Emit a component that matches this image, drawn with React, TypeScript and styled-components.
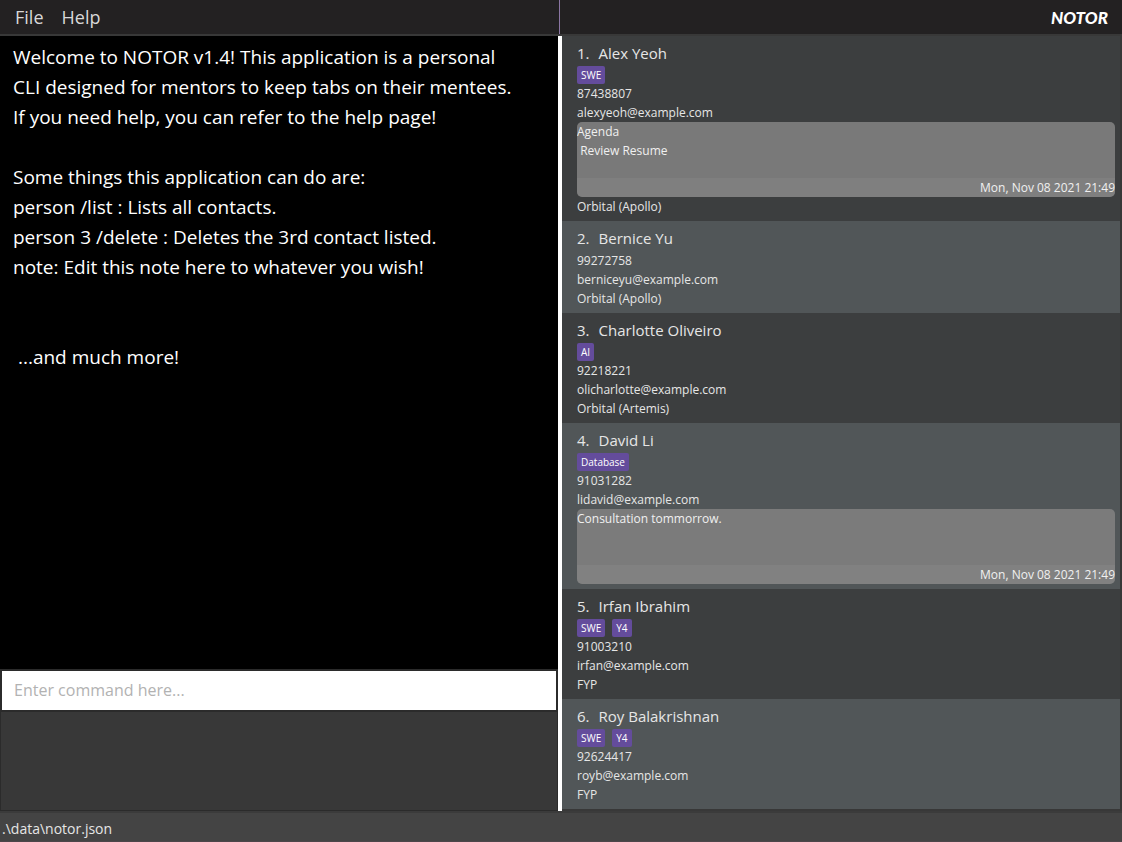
import React from "react";
import styled, { createGlobalStyle } from "styled-components";

const GlobalStyle = createGlobalStyle`
  * { box-sizing: border-box; }
  body {
    margin: 0;
    background: #383838;
    font-family: "Open Sans", "Noto Sans", sans-serif;
  }
`;

const Window = styled.div`
  display: flex;
  flex-direction: column;
  min-height: 100vh;
`;

const TopBar = styled.header`
  display: grid;
  grid-template-columns: 1fr 1fr;
  height: 34px;
  background: #232122;
`;

const MenuBar = styled.nav`
  display: flex;
  align-items: center;
  gap: 18px;
  padding-left: 15px;
`;

const MenuButton = styled.button`
  border: 0;
  padding: 0;
  background: none;
  color: #d8d8d8;
  font-family: inherit;
  font-size: 18px;
  line-height: 24px;
`;

const Brand = styled.div`
  display: flex;
  align-items: center;
  justify-content: flex-end;
  margin-left: -2px;
  padding-right: 14px;
  border-left: 1px solid #8b76a3;
  color: #fff;
  font-family: Lato, sans-serif;
  font-size: 17px;
  font-weight: 900;
  font-style: italic;
`;

const SplitPane = styled.main`
  display: grid;
  grid-template-columns: calc(50% - 3px) 4px minmax(0, 1fr);
  flex: 1;
  padding-top: 2px;
`;

const LeftPane = styled.section`
  display: flex;
  flex-direction: column;
`;

const Divider = styled.div`
  background: #fff;
`;

const NoteEditor = styled.textarea`
  flex: 1;
  border: 0;
  outline: 0;
  resize: none;
  padding: 6px 13px;
  overflow: hidden;
  background: #000;
  color: #fff;
  font-family: inherit;
  font-size: 19px;
  line-height: 30px;
`;

const CommandInput = styled.input`
  height: 43px;
  padding: 0 12px 2px;
  border: 2px solid #2b2b2b;
  outline: 0;
  background: #fff;
  color: #222;
  font-family: inherit;
  font-size: 16px;

  &::placeholder {
    color: #b2b2b2;
    opacity: 1;
  }
`;

const ResultBox = styled.output`
  height: 99px;
  border: 1px solid #2b2b2b;
  border-top: 0;
  background: #383838;
`;

const PersonList = styled.ol`
  margin: 0;
  padding: 0 2px 2px 0;
  list-style: none;
`;

const Card = styled.li`
  padding: 5px 5px 5px 15px;
  background: #3c3e3f;
  color: #e6e6e6;
  font-size: 12px;
  line-height: 19px;

  &:nth-child(even) {
    background: #515658;
  }
`;

const Name = styled.h2`
  display: flex;
  gap: 9px;
  margin: 0;
  font-size: 15px;
  font-weight: 400;
  line-height: 25px;
`;

const Tags = styled.div`
  display: flex;
  gap: 7px;
`;

const Tag = styled.span`
  padding: 0 4px;
  border-radius: 2px;
  background: #644c9c;
  color: #fff;
  font-size: 10px;
  line-height: 18px;
`;

const Line = styled.div`
  white-space: pre;
`;

const Note = styled.div`
  overflow: hidden;
  border-radius: 5px;
  background: rgba(128, 128, 128, 0.9);
  color: #f0f0f0;
`;

const NoteText = styled.div`
  min-height: 56px;
  white-space: pre-wrap;
`;

const NoteTime = styled.div`
  background: rgba(144, 144, 144, 0.3);
  text-align: right;
`;

const StatusBar = styled.footer`
  height: 31px;
  padding-left: 2px;
  border-top: 2px solid #3b3b3b;
  border-bottom: 1px solid #4d464a;
  background: #444;
  color: #e6e6e6;
  font-size: 14px;
  line-height: 32px;
`;

type Person = {
  name: string;
  tags: string[];
  phone: string;
  email: string;
  note?: string;
  time?: string;
  group?: string;
};

const people: Person[] = [
  {
    name: "Alex Yeoh",
    tags: ["SWE"],
    phone: "87438807",
    email: "alexyeoh@example.com",
    note: "Agenda\n Review Resume",
    time: "Mon, Nov 08 2021 21:49",
    group: "Orbital (Apollo)",
  },
  { name: "Bernice Yu", tags: [], phone: "99272758", email: "berniceyu@example.com", group: "Orbital (Apollo)" },
  { name: "Charlotte Oliveiro", tags: ["AI"], phone: "92218221", email: "olicharlotte@example.com", group: "Orbital (Artemis)" },
  {
    name: "David Li",
    tags: ["Database"],
    phone: "91031282",
    email: "lidavid@example.com",
    note: "Consultation tommorrow.",
    time: "Mon, Nov 08 2021 21:49",
  },
  { name: "Irfan Ibrahim", tags: ["SWE", "Y4"], phone: "91003210", email: "irfan@example.com", group: "FYP" },
  { name: "Roy Balakrishnan", tags: ["SWE", "Y4"], phone: "92624417", email: "royb@example.com", group: "FYP" },
];

const generalNote = `Welcome to NOTOR v1.4! This application is a personal
CLI designed for mentors to keep tabs on their mentees.
If you need help, you can refer to the help page!

Some things this application can do are:
person /list : Lists all contacts.
person 3 /delete : Deletes the 3rd contact listed.
note: Edit this note here to whatever you wish!


 ...and much more!`;

function PersonCard({ person, index }: { person: Person; index: number }) {
  return (
    <Card>
      <Name>
        <span>{index}.</span>
        <span>{person.name}</span>
      </Name>
      {person.tags.length > 0 && (
        <Tags>
          {person.tags.map((tag) => (
            <Tag key={tag}>{tag}</Tag>
          ))}
        </Tags>
      )}
      <Line>{person.phone}</Line>
      <Line>{person.email}</Line>
      {person.note && (
        <Note>
          <NoteText>{person.note}</NoteText>
          <NoteTime>{person.time}</NoteTime>
        </Note>
      )}
      {person.group && <Line>{person.group}</Line>}
    </Card>
  );
}

export default function App() {
  return (
    <>
      <GlobalStyle />
      <Window>
        <TopBar>
          <MenuBar>
            <MenuButton type="button">File</MenuButton>
            <MenuButton type="button">Help</MenuButton>
          </MenuBar>
          <Brand>NOTOR</Brand>
        </TopBar>
        <SplitPane>
          <LeftPane>
            <NoteEditor aria-label="General note" defaultValue={generalNote} spellCheck={false} />
            <CommandInput aria-label="Command" placeholder="Enter command here..." />
            <ResultBox aria-label="Result" />
          </LeftPane>
          <Divider />
          <PersonList>
            {people.map((person, i) => (
              <PersonCard key={person.name} person={person} index={i + 1} />
            ))}
          </PersonList>
        </SplitPane>
        <StatusBar>.\data\notor.json</StatusBar>
      </Window>
    </>
  );
}
